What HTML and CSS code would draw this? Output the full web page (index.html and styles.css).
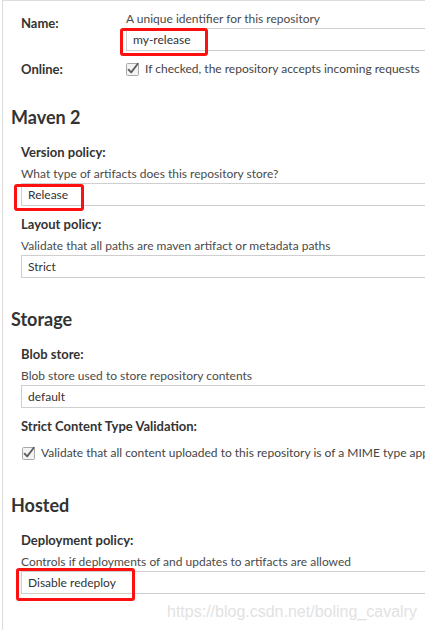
FILE: index.html
```html
<!DOCTYPE html>
<html>
<head>
<meta charset="utf-8">
<link rel="stylesheet" href="styles.css">
</head>
<body>
<div class="panel">
  <div class="top">
    <div class="trow">
      <div class="tlabel tlabel-name">Name:</div>
      <div class="tval">
        <div class="desc">A unique identifier for this repository</div>
        <div class="input">my-release<span class="mark mark-name"></span></div>
      </div>
    </div>
    <div class="trow trow-online">
      <div class="tlabel">Online:</div>
      <div class="tval check-row">
        <span class="cb"><svg width="13" height="13" viewBox="0 0 13 13"><rect x="0.5" y="0.5" width="12" height="12" rx="1" fill="#f3f3f3" stroke="#a9a9a9"/><path d="M2.6 6.6 L5.2 9.4 L11.8 0.8" fill="none" stroke="#5c5c5c" stroke-width="1.8" stroke-linecap="round" stroke-linejoin="round"/></svg></span>
        <span>If checked, the repository accepts incoming requests</span>
      </div>
    </div>
  </div>

  <section class="sect">
    <h2>Maven 2</h2>
    <div class="field">
      <div class="flabel">Version policy:</div>
      <div class="desc">What type of artifacts does this repository store?</div>
      <div class="input">Release<span class="mark mark-release"></span></div>
    </div>
    <div class="field">
      <div class="flabel">Layout policy:</div>
      <div class="desc">Validate that all paths are maven artifact or metadata paths</div>
      <div class="input">Strict</div>
    </div>
  </section>

  <section class="sect">
    <h2>Storage</h2>
    <div class="field">
      <div class="flabel">Blob store:</div>
      <div class="desc">Blob store used to store repository contents</div>
      <div class="input">default</div>
    </div>
    <div class="field">
      <div class="flabel">Strict Content Type Validation:</div>
      <div class="check-row check-row-field">
        <span class="cb"><svg width="13" height="13" viewBox="0 0 13 13"><rect x="0.5" y="0.5" width="12" height="12" rx="1" fill="#f3f3f3" stroke="#a9a9a9"/><path d="M2.6 6.6 L5.2 9.4 L11.8 0.8" fill="none" stroke="#5c5c5c" stroke-width="1.8" stroke-linecap="round" stroke-linejoin="round"/></svg></span>
        <span>Validate that all content uploaded to this repository is of a MIME type appropriate for the repository format</span>
      </div>
    </div>
  </section>

  <section class="sect sect-hosted">
    <h2>Hosted</h2>
    <div class="field">
      <div class="flabel">Deployment policy:</div>
      <div class="desc">Controls if deployments of and updates to artifacts are allowed</div>
      <div class="input">Disable redeploy<span class="mark mark-deploy"></span></div>
    </div>
  </section>
</div>
<div class="watermark">https://blog.csdn.net/boling_cavalry</div>
</body>
</html>
```

FILE: styles.css
```css
html, body {
  margin: 0;
  padding: 0;
  background: #fff;
  overflow: hidden;
  height: 630px;
}
body {
  position: relative;
  font-family: Lato, "Open Sans", sans-serif;
  font-size: 12px;
  color: #333;
}
.panel {
  margin-left: 2px;
  width: 700px;
  height: 640px;
  border-left: 1px solid #dcdcdc;
  border-top: 1px solid #dcdcdc;
  padding-top: 11px;
  box-sizing: border-box;
}
.top {
  padding-left: 18px;
}
.trow {
  display: flex;
}
.tlabel {
  width: 105px;
  flex: none;
  font-weight: 700;
  font-size: 13px;
  line-height: 14px;
  color: #333;
}
.tlabel-name {
  padding-top: 4px;
}
.tval {
  flex: 1;
}
.trow-online {
  margin-top: 11px;
}
.desc {
  line-height: 14px;
  color: #4a4a4a;
  white-space: nowrap;
  margin-bottom: 2px;
}
.input {
  position: relative;
  height: 23px;
  box-sizing: border-box;
  border: 1px solid #cfcfcf;
  padding-left: 6px;
  line-height: 21px;
  color: #333;
  background: #fff;
  white-space: nowrap;
  font-size: 12px;
}
.check-row {
  display: flex;
  align-items: center;
  gap: 6px;
  line-height: 14px;
  white-space: nowrap;
  color: #444;
}
.cb {
  display: flex;
  width: 13px;
  height: 13px;
  flex: none;
}
.sect {
  margin-top: 29px;
  padding-left: 8px;
}
.sect h2 {
  margin: 0 0 16px 0;
  font-size: 18px;
  line-height: 24px;
  font-weight: 700;
  color: #333;
}
.field {
  padding-left: 10px;
  margin-bottom: 11px;
}
.sect .field:last-child {
  margin-bottom: 0;
}
.flabel {
  font-weight: 700;
  font-size: 13px;
  line-height: 14px;
  margin-bottom: 8px;
  color: #333;
}
.check-row-field {
  margin-top: 13px;
  padding-left: 1px;
}
.sect-hosted {
  margin-top: 33px;
}
.mark {
  position: absolute;
  border: 3px solid #ff1010;
  border-radius: 3px;
  box-sizing: border-box;
}
.mark-name {
  left: -7px;
  top: -1px;
  width: 88px;
  height: 28px;
}
.mark-release {
  left: -8px;
  top: 0px;
  width: 70px;
  height: 27px;
}
.mark-deploy {
  left: -6px;
  top: -4px;
  width: 119px;
  height: 33px;
}
.watermark {
  position: absolute;
  left: 167px;
  top: 602px;
  font-family: "Liberation Sans", Arial, sans-serif;
  font-size: 16px;
  line-height: 20px;
  color: #e2e2e2;
  white-space: nowrap;
}
```
